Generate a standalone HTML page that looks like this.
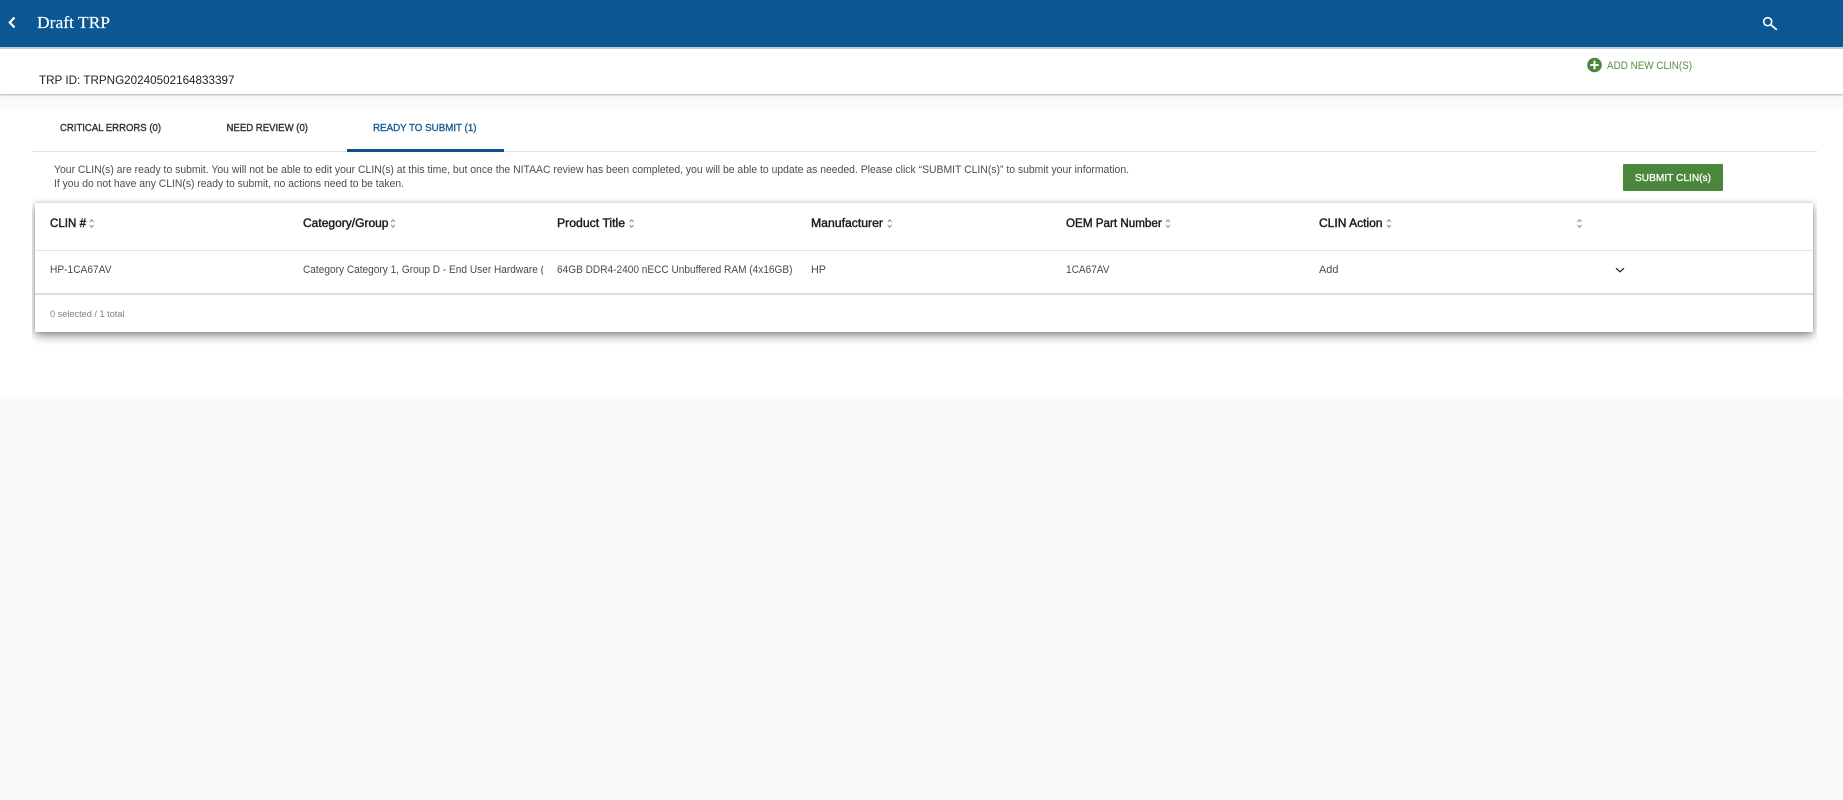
<!DOCTYPE html>
<html lang="en">
<head>
<meta charset="utf-8">
<title>Draft TRP</title>
<style>
html,body{margin:0;padding:0;width:1843px;height:800px;overflow:hidden;background:#fafafa;}
.abs{position:absolute;}
svg.t{position:absolute;left:0;top:0;z-index:5;}
text{font-family:"Liberation Sans",Arial,sans-serif;}
</style>
</head>
<body>
<div class="abs" style="left:0;top:0;width:1843px;height:47px;background:#0b5794;"></div>
<div class="abs" style="left:0;top:47px;width:1843px;height:2px;background:#c9d0d6;"></div>
<div class="abs" style="left:0;top:49px;width:1843px;height:45px;background:#fff;box-shadow:0 1px 2px rgba(0,0,0,.3);"></div>
<div class="abs" style="left:0;top:109px;width:1843px;height:288px;background:#fff;"></div>
<div class="abs" style="left:32px;top:151px;width:1785px;height:1px;background:#e2e2e2;"></div>
<div class="abs" style="left:347px;top:149px;width:157px;height:2.5px;background:#0d4f94;"></div>
<div class="abs" style="left:1623px;top:164px;width:100px;height:27px;background:#4a873c;border-radius:1px;"></div>
<div class="abs" style="left:32px;top:190px;width:1785px;height:155px;overflow:hidden;">
  <div class="abs" style="left:3px;top:13px;width:1778px;height:129px;background:#fff;box-shadow:0 4px 9px rgba(0,0,0,.42),0 0 5px rgba(0,0,0,.15);">
    <div class="abs" style="left:0;top:47px;width:100%;height:1px;background:#e2e2e2;"></div>
    <div class="abs" style="left:0;top:90px;width:100%;height:2px;background:#dcdcdc;"></div>
  </div>
</div>
<svg class="t" width="1843" height="800" viewBox="0 0 1843 800" xmlns="http://www.w3.org/2000/svg">
  <defs><clipPath id="c"><rect x="303" y="255" width="240" height="30"/></clipPath></defs>
  <path d="M14.5 17.5 L9.8 22.5 L14.5 27.5" fill="none" stroke="#fff" stroke-width="2.2"/>
  <text x="37" y="28" font-size="17" fill="#fff" stroke="#fff" stroke-width=".15" style="font-family:'Liberation Serif',serif" textLength="73" lengthAdjust="spacingAndGlyphs">Draft TRP</text>
  <circle cx="1767.7" cy="21.7" r="4" fill="none" stroke="#fff" stroke-width="1.6"/>
  <path d="M1770.8 24.8 L1776.8 29.8" fill="none" stroke="#fff" stroke-width="1.8"/>

  <text x="39" y="84" font-size="11.7" fill="#222" textLength="195.5" lengthAdjust="spacingAndGlyphs">TRP ID: TRPNG20240502164833397</text>
  <circle cx="1594.5" cy="65" r="7.3" fill="#4a873c"/>
  <path d="M1590.3 65H1598.7M1594.5 60.8V69.2" stroke="#fff" stroke-width="1.9"/>
  <text x="1607" y="69" font-size="11" fill="#55903f" textLength="85" lengthAdjust="spacingAndGlyphs">ADD NEW CLIN(S)</text>

  <g font-size="10.5" stroke-width=".38">
    <text x="60" y="131" fill="#333" stroke="#333" textLength="101" lengthAdjust="spacingAndGlyphs">CRITICAL ERRORS (0)</text>
    <text x="226.5" y="131" fill="#333" stroke="#333" textLength="81.5" lengthAdjust="spacingAndGlyphs">NEED REVIEW (0)</text>
    <text x="373" y="131" fill="#1f5f96" stroke="#1f5f96" textLength="103.5" lengthAdjust="spacingAndGlyphs">READY TO SUBMIT (1)</text>
  </g>

  <g font-size="11" fill="#4d4d4d">
    <text x="54" y="173" textLength="1075" lengthAdjust="spacingAndGlyphs">Your CLIN(s) are ready to submit. You will not be able to edit your CLIN(s) at this time, but once the NITAAC review has been completed, you will be able to update as needed. Please click “SUBMIT CLIN(s)” to submit your information.</text>
    <text x="54" y="187" textLength="350" lengthAdjust="spacingAndGlyphs">If you do not have any CLIN(s) ready to submit, no actions need to be taken.</text>
  </g>

  <text x="1635" y="181" font-size="10.5" fill="#fff" stroke="#fff" stroke-width=".3" textLength="76" lengthAdjust="spacingAndGlyphs">SUBMIT CLIN(s)</text>

  <g font-size="11.5" fill="#1c1c1c" stroke="#1c1c1c" stroke-width=".42">
    <text x="50" y="227" textLength="36" lengthAdjust="spacingAndGlyphs">CLIN #</text>
    <text x="303" y="227" textLength="85.5" lengthAdjust="spacingAndGlyphs">Category/Group</text>
    <text x="557" y="227" textLength="68" lengthAdjust="spacingAndGlyphs">Product Title</text>
    <text x="811" y="227" textLength="72" lengthAdjust="spacingAndGlyphs">Manufacturer</text>
    <text x="1066" y="227" textLength="95.7" lengthAdjust="spacingAndGlyphs">OEM Part Number</text>
    <text x="1319" y="227" textLength="63.5" lengthAdjust="spacingAndGlyphs">CLIN Action</text>
  </g>

  <g fill="none" stroke="#8f8f8f" stroke-width="1">
    <path d="M89.8 222 L91.7 219.7 L93.6 222 M89.8 225 L91.7 227.3 L93.6 225"/>
    <path d="M391.1 222 L393 219.7 L394.9 222 M391.1 225 L393 227.3 L394.9 225"/>
    <path d="M629.7 222 L631.6 219.7 L633.5 222 M629.7 225 L631.6 227.3 L633.5 225"/>
    <path d="M887.8 222 L889.7 219.7 L891.6 222 M887.8 225 L889.7 227.3 L891.6 225"/>
    <path d="M1166.1 222 L1168 219.7 L1169.9 222 M1166.1 225 L1168 227.3 L1169.9 225"/>
    <path d="M1387.1 222 L1389 219.7 L1390.9 222 M1387.1 225 L1389 227.3 L1390.9 225"/>
    <path d="M1577.6 222 L1579.5 219.7 L1581.4 222 M1577.6 225 L1579.5 227.3 L1581.4 225"/>
  </g>

  <g font-size="11" fill="#4a4a4a">
    <text x="50" y="273" textLength="61.5" lengthAdjust="spacingAndGlyphs">HP-1CA67AV</text>
    <g clip-path="url(#c)"><text x="303" y="273" textLength="241" lengthAdjust="spacingAndGlyphs">Category Category 1, Group D - End User Hardware (</text></g>
    <text x="557" y="273" textLength="235.5" lengthAdjust="spacingAndGlyphs">64GB DDR4-2400 nECC Unbuffered RAM (4x16GB)</text>
    <text x="811" y="273" textLength="15" lengthAdjust="spacingAndGlyphs">HP</text>
    <text x="1066" y="273" textLength="43.5" lengthAdjust="spacingAndGlyphs">1CA67AV</text>
    <text x="1319" y="273" textLength="19.4" lengthAdjust="spacingAndGlyphs">Add</text>
  </g>
  <path d="M1616 268.2 L1620 271.8 L1624 268.2" fill="none" stroke="#222" stroke-width="1.3"/>

  <text x="50" y="317" font-size="9" fill="#808080" textLength="74.5" lengthAdjust="spacingAndGlyphs">0 selected / 1 total</text>
</svg>
</body>
</html>
